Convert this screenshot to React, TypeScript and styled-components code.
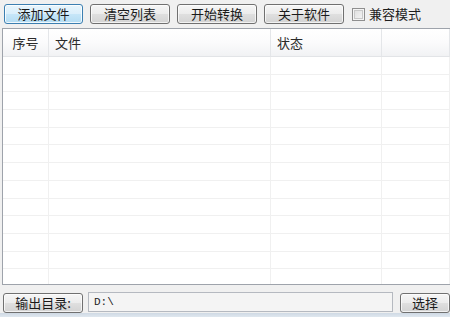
import React from "react";
import styled, { createGlobalStyle, css } from "styled-components";

const GlobalStyle = createGlobalStyle`
  html, body { margin: 0; padding: 0; }
  body {
    width: 450px;
    height: 317px;
    overflow: hidden;
    background: #f0f0f0;
    font-family: "Noto Sans CJK SC", "Microsoft YaHei", sans-serif;
    color: #1e1e1e;
  }
`;

const Window = styled.div`
  width: 450px;
  height: 317px;
  display: flex;
  flex-direction: column;
  background: #f0f0f0;
  overflow: hidden;
`;

const Toolbar = styled.div`
  display: flex;
  align-items: center;
  gap: 7px;
  padding: 4px 0 0 4px;
  height: 20px;
`;

const Button = styled.button<{ $primary?: boolean; $w?: number }>`
  box-sizing: border-box;
  width: ${(p) => p.$w ?? 79}px;
  height: 20px;
  flex: none;
  padding: 0;
  margin: 0;
  border: 1px solid #707070;
  border-radius: 3px;
  background: linear-gradient(#f6f6f6 0%, #ececec 48%, #dfdfdf 52%, #d3d3d3 100%);
  font-family: "Noto Sans CJK SC", sans-serif;
  font-size: 13px;
  line-height: 18px;
  color: #1a1a1a;
  box-shadow: inset 0 0 0 1px rgba(255, 255, 255, 0.7);
  ${(p) =>
    p.$primary &&
    css`
      border-color: #3c7fb1;
      background: linear-gradient(#e8f5fc 0%, #dbeffb 48%, #c6e6f8 52%, #b3dcf3 100%);
      box-shadow: inset 0 0 0 1px rgba(255, 255, 255, 0.8);
    `}
`;

const CheckLabel = styled.label`
  display: flex;
  align-items: center;
  gap: 4px;
  margin-left: 1px;
  font-size: 13px;
  line-height: 18px;
`;

const CheckBox = styled.span`
  box-sizing: border-box;
  width: 13px;
  height: 13px;
  border: 1px solid #8f8f8f;
  background: linear-gradient(135deg, #dcdcdc, #f8f8f8);
  box-shadow: inset 0 0 0 1px #f4f4f4, inset 0 0 0 2px #c9c9c9;
`;

const ListView = styled.div`
  box-sizing: border-box;
  margin: 4px 0 0 2px;
  height: 257px;
  border: 1px solid #9ea3ab;
  border-right: none;
  background: #ffffff;
  display: flex;
  flex-direction: column;
  overflow: hidden;
`;

const cols = "46px 222px 111px 1fr";

const HeaderRow = styled.div`
  display: grid;
  grid-template-columns: ${cols};
  height: 27px;
  flex: none;
  background: linear-gradient(#ffffff 0%, #fbfbfc 50%, #f1f2f4 100%);
  border-bottom: 1px solid #e2e4e7;
`;

const HeaderCell = styled.div<{ $center?: boolean }>`
  display: flex;
  align-items: center;
  justify-content: ${(p) => (p.$center ? "center" : "flex-start")};
  padding-left: ${(p) => (p.$center ? 0 : 6)}px;
  border-right: 1px solid #e4e6e9;
  font-size: 13px;
  color: #2a2a2a;
`;

const Row = styled.div`
  display: grid;
  grid-template-columns: ${cols};
  height: 17.7px;
  flex: none;
  box-sizing: border-box;
  border-bottom: 1px solid #f0f0f0;
`;

const Cell = styled.div`
  border-right: 1px solid #f0f0f0;
`;

const BottomBar = styled.div`
  display: flex;
  align-items: center;
  padding: 0 0 0 3px;
  margin-top: 7px;
  height: 21px;
`;

const PathBox = styled.div`
  box-sizing: border-box;
  flex: none;
  width: 305px;
  height: 20px;
  margin: -1px 7px 0 5px;
  border: 1px solid #b5b9c0;
  background: #f4f4f4;
  padding-left: 5px;
  font-family: "Liberation Mono", monospace;
  font-size: 11px;
  line-height: 18px;
  color: #222;
`;

const StatusStrip = styled.div`
  margin-top: auto;
  height: 4px;
  background: linear-gradient(#cfd9e4, #dfe7ef);
`;

const columns: { label: string; center?: boolean }[] = [
  { label: "序号", center: true },
  { label: "文件" },
  { label: "状态" },
  { label: "" },
];

export default function App() {
  const rows = Array.from({ length: 13 });
  return (
    <>
      <GlobalStyle />
      <Window>
        <Toolbar>
          <Button $primary>添加文件</Button>
          <Button $w={80}>清空列表</Button>
          <Button $w={80}>开始转换</Button>
          <Button $w={80}>关于软件</Button>
          <CheckLabel>
            <CheckBox />
            兼容模式
          </CheckLabel>
        </Toolbar>
        <ListView>
          <HeaderRow>
            {columns.map((c, i) => (
              <HeaderCell key={i} $center={c.center}>
                {c.label}
              </HeaderCell>
            ))}
          </HeaderRow>
          {rows.map((_, i) => (
            <Row key={i}>
              <Cell />
              <Cell />
              <Cell />
              <Cell />
            </Row>
          ))}
        </ListView>
        <BottomBar>
          <Button $w={80}>输出目录:</Button>
          <PathBox>D:\</PathBox>
          <Button $w={50}>选择</Button>
        </BottomBar>
        <StatusStrip />
      </Window>
    </>
  );
}
